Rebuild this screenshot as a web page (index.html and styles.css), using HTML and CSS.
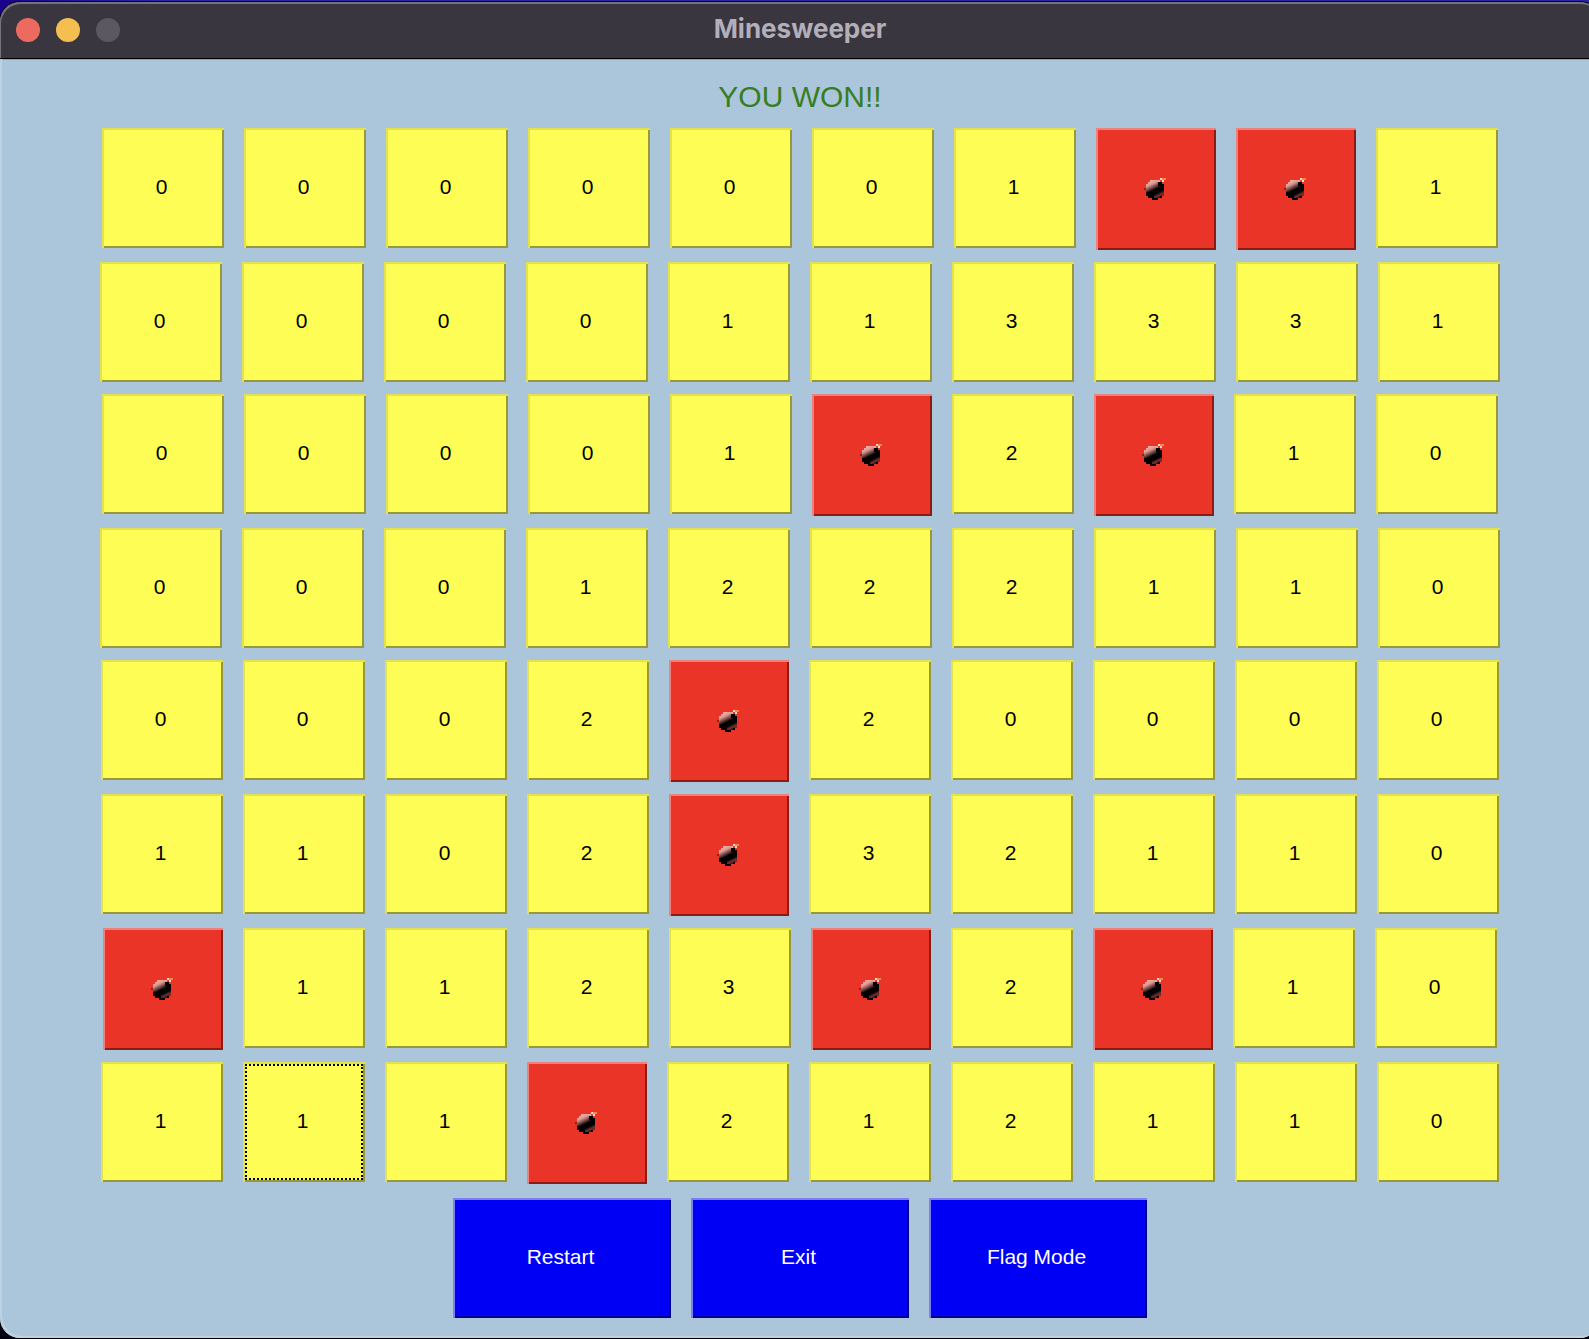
FILE: index.html
```html
<!DOCTYPE html>
<html lang="en">
<head>
<meta charset="utf-8">
<title>Minesweeper</title>
<link rel="stylesheet" href="styles.css">
</head>
<body>
<svg class="sprite" aria-hidden="true">
  <defs>
    <linearGradient id="shine" gradientUnits="userSpaceOnUse" x1="6" y1="3" x2="15" y2="21">
      <stop offset="0" stop-color="#f8b4ac"/>
      <stop offset=".22" stop-color="#dc9a93"/>
      <stop offset=".38" stop-color="#7a4a46"/>
      <stop offset=".54" stop-color="#000"/>
      <stop offset=".74" stop-color="#000"/>
      <stop offset=".88" stop-color="#6e3230"/>
      <stop offset="1" stop-color="#3a0d0b"/>
    </linearGradient>
    <symbol id="bomb" viewBox="0 0 24 24">
      <g shape-rendering="crispEdges">
        <path fill="url(#shine)" d="M6 3h8v2h4v2h2v10h-2v2h-2v2h-2v2H8v-2H4v-2H2V7h2V5h2z"/>
        <path fill="#000" d="M14 5h4v2h2v6h-4V9h-2zM2 15h2v2h2v2h4v2h4v2H8v-2H4v-2H2zM16 19h2v2h-2z"/>
        <path fill="#7a2a22" d="M0 11h2v2H0zM18 17h2v2h-2z"/>
        <path fill="#e9a79c" d="M14 3h2v2h-2z"/>
        <path fill="#f7dcc8" d="M16 1h2v2h2v2h-2V3h-2z"/>
        <path fill="#f08a3c" d="M18 1h4v2h-4z"/>
      </g>
    </symbol>
  </defs>
</svg>
<div class="window">
  <header class="titlebar">
    <div class="lights">
      <button class="light close" aria-label="Close"></button>
      <button class="light minimize" aria-label="Minimize"></button>
      <button class="light zoom" aria-label="Zoom" disabled></button>
    </div>
    <h1 class="title">Minesweeper</h1>
  </header>
  <main class="game">
    <p class="status">YOU WON!!</p>
    <div class="board">
      <div class="row">
        <button class="cell">0</button><button class="cell">0</button><button class="cell">0</button><button class="cell">0</button><button class="cell">0</button><button class="cell">0</button><button class="cell">1</button>
        <button class="cell mine" aria-label="Mine"><svg class="bomb"><use href="#bomb"/></svg></button>
        <button class="cell mine" aria-label="Mine"><svg class="bomb"><use href="#bomb"/></svg></button>
        <button class="cell">1</button>
      </div>
      <div class="row">
        <button class="cell">0</button><button class="cell">0</button><button class="cell">0</button><button class="cell">0</button><button class="cell">1</button><button class="cell">1</button><button class="cell">3</button><button class="cell">3</button><button class="cell">3</button><button class="cell">1</button>
      </div>
      <div class="row">
        <button class="cell">0</button><button class="cell">0</button><button class="cell">0</button><button class="cell">0</button><button class="cell">1</button>
        <button class="cell mine" aria-label="Mine"><svg class="bomb"><use href="#bomb"/></svg></button>
        <button class="cell">2</button>
        <button class="cell mine" aria-label="Mine"><svg class="bomb"><use href="#bomb"/></svg></button>
        <button class="cell">1</button><button class="cell">0</button>
      </div>
      <div class="row">
        <button class="cell">0</button><button class="cell">0</button><button class="cell">0</button><button class="cell">1</button><button class="cell">2</button><button class="cell">2</button><button class="cell">2</button><button class="cell">1</button><button class="cell">1</button><button class="cell">0</button>
      </div>
      <div class="row">
        <button class="cell">0</button><button class="cell">0</button><button class="cell">0</button><button class="cell">2</button>
        <button class="cell mine" aria-label="Mine"><svg class="bomb"><use href="#bomb"/></svg></button>
        <button class="cell">2</button><button class="cell">0</button><button class="cell">0</button><button class="cell">0</button><button class="cell">0</button>
      </div>
      <div class="row">
        <button class="cell">1</button><button class="cell">1</button><button class="cell">0</button><button class="cell">2</button>
        <button class="cell mine" aria-label="Mine"><svg class="bomb"><use href="#bomb"/></svg></button>
        <button class="cell">3</button><button class="cell">2</button><button class="cell">1</button><button class="cell">1</button><button class="cell">0</button>
      </div>
      <div class="row">
        <button class="cell mine" aria-label="Mine"><svg class="bomb"><use href="#bomb"/></svg></button>
        <button class="cell">1</button><button class="cell">1</button><button class="cell">2</button><button class="cell">3</button>
        <button class="cell mine" aria-label="Mine"><svg class="bomb"><use href="#bomb"/></svg></button>
        <button class="cell">2</button>
        <button class="cell mine" aria-label="Mine"><svg class="bomb"><use href="#bomb"/></svg></button>
        <button class="cell">1</button><button class="cell">0</button>
      </div>
      <div class="row">
        <button class="cell">1</button><button class="cell selected">1</button><button class="cell">1</button>
        <button class="cell mine" aria-label="Mine"><svg class="bomb"><use href="#bomb"/></svg></button>
        <button class="cell">2</button><button class="cell">1</button><button class="cell">2</button><button class="cell">1</button><button class="cell">1</button><button class="cell">0</button>
      </div>
    </div>
    <div class="actions">
      <button class="action">Restart</button>
      <button class="action">Exit</button>
      <button class="action">Flag Mode</button>
    </div>
  </main>
</div>
</body>
</html>
```
FILE: styles.css
```css
* {
  box-sizing: border-box;
}

html {
  background: #02010f;
}

body {
  margin: 0;
  padding-top: 2px;
  min-height: 100vh;
  overflow: hidden;
  font-family: "Liberation Sans", Arial, Helvetica, sans-serif;
  background: linear-gradient(90deg, #1c0090, #2c22ac 10%) top / 100% 24px no-repeat #02010f;
}

.sprite {
  position: absolute;
  width: 0;
  height: 0;
}

/* The window runs a little past the right edge of the screen. */
.window {
  margin-right: -11px;
  border-radius: 20px;
  overflow: hidden;
  background: #abc6da;
  box-shadow: 0 0 0 1px #000;
}

.titlebar {
  display: grid;
  grid-template-columns: 1fr auto 1fr;
  align-items: center;
  height: 57px;
  padding: 0 16px;
  background: #39363f;
  border-bottom: 1px solid #000;
  border-radius: 20px 20px 0 0;
  box-shadow: inset 1px 2px 0 #74727a;
}

.lights {
  display: flex;
  gap: 16px;
}

.light {
  width: 24px;
  height: 24px;
  padding: 0;
  border: 0;
  border-radius: 50%;
}

.close {
  background: #ec6a5e;
}

.minimize {
  background: #f4bf50;
}

.zoom {
  background: #5b5862;
}

.title {
  margin: 0;
  padding-bottom: 2px;
  font: 700 26px/32px Inter, sans-serif;
  color: #b3afba;
}

.game {
  padding: 19px 0 20px;
  border-radius: 0 0 20px 20px;
  box-shadow: inset 2px -2px 0 #bcd2e0, inset 0 1px 0 #8ea4b4;
}

.status {
  margin: 0 0 12px;
  font-size: 30px;
  line-height: 38px;
  text-align: center;
  color: #377e22;
}

.board {
  display: flex;
  flex-direction: column;
  gap: 12px;
}

.row,
.actions {
  display: flex;
  justify-content: center;
  align-items: flex-start;
  gap: 20px;
}

.cell,
.action {
  flex: none;
  height: 120px;
  padding: 0 3px 2px 0;
  border: 0;
  font: 21px/24px "Liberation Sans", Arial, Helvetica, sans-serif;
}

.cell {
  width: 122px;
  color: #000;
  background: #fefd55;
  box-shadow: inset 2px 2px 0 #e3e24e, inset -2px -2px 0 #98973a;
}

.mine {
  display: flex;
  align-items: center;
  justify-content: center;
  width: 120px;
  height: 122px;
  padding: 0;
  background: #e93427;
  box-shadow: inset 2px 2px 0 #ec817e, inset -2px -2px 0 #8a1c13;
}

.bomb {
  width: 24px;
  height: 24px;
}

.selected {
  outline: 2px dotted #000;
  outline-offset: -4px;
}

.actions {
  margin-top: 14px;
}

.action {
  width: 218px;
  color: #fff;
  background: #0000f5;
  box-shadow: inset 2px 2px 0 #7f7ff4, inset -2px -2px 0 #00008e;
}
```
